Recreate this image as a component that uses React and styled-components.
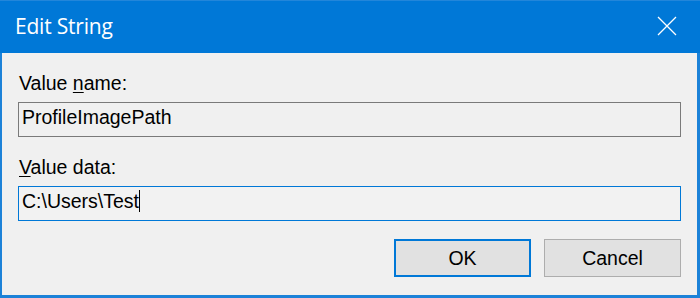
import styled, { createGlobalStyle } from 'styled-components';

const GlobalStyle = createGlobalStyle`
  html, body {
    margin: 0;
    padding: 0;
    background: #f0f0f0;
  }
`

const Window = styled.div`
  width: 700px;
  height: 298px;
  box-sizing: border-box;
  display: flex;
  flex-direction: column;
  background: #f0f0f0;
  border-left: 2px solid #1c82d8;
  border-right: 3px solid #1c82d8;
  border-bottom: 3px solid #1c82d8;
  font-family: "Liberation Sans", Arial, sans-serif;
  color: #000;
`

const TitleBar = styled.div`
  height: 53px;
  margin-left: -2px;
  margin-right: -3px;
  flex-shrink: 0;
  display: flex;
  align-items: center;
  justify-content: space-between;
  background: #0078d7;
  border-top: 1px solid #2286da;
  box-sizing: border-box;
  padding: 0 0 2px 15px;
`

const Title = styled.span`
  font-family: "Open Sans", "Noto Sans", sans-serif;
  font-size: 21px;
  color: #fff;
  letter-spacing: -0.2px;
`

const CloseButton = styled.div`
  width: 46px;
  height: 100%;
  display: flex;
  align-items: center;
  justify-content: center;
  margin-right: 10px;
`

const Body = styled.div`
  flex: 1;
  display: flex;
  flex-direction: column;
  padding: 19px 16px 0 16px;
`

const Label = styled.div`
  font-size: 19.5px;
  line-height: 22px;
  height: 22px;
  margin-bottom: 8px;
  padding-left: 1px;
`

const Key = styled.span`
  text-decoration: underline;
  text-underline-offset: 2px;
  text-decoration-thickness: 1px;
`

const Field = styled.div`
  height: 35px;
  box-sizing: border-box;
  border: 1px solid ${p => (p.$focused ? '#0078d7' : '#7a7a7a')};
  background: ${p => (p.$focused ? '#f2f2f2' : '#f0f0f0')};
  display: flex;
  align-items: flex-start;
  padding: 3px 0 0 3px;
  font-size: 19.5px;
  line-height: 22px;
  margin-bottom: ${p => p.$gap}px;
`

const Caret = styled.span`
  display: inline-block;
  width: 1px;
  height: 22px;
  background: #000;
`

const ButtonRow = styled.div`
  display: flex;
  justify-content: flex-end;
  gap: 13px;
`

const Button = styled.div`
  width: 137px;
  height: 38px;
  box-sizing: border-box;
  display: flex;
  align-items: center;
  justify-content: center;
  background: #e1e1e1;
  border: ${p => (p.$default ? '2px solid #0078d7' : '1px solid #adadad')};
  font-size: 19.5px;
`

export default function App() {
  return (
    <>
      <GlobalStyle />
      <Window>
        <TitleBar>
          <Title>Edit String</Title>
          <CloseButton>
            <svg width="20" height="20" viewBox="0 0 20 20">
              <path d="M1 1 L19 19 M19 1 L1 19" stroke="#fff" strokeWidth="1.3" fill="none" />
            </svg>
          </CloseButton>
        </TitleBar>
        <Body>
          <Label>Value <Key>n</Key>ame:</Label>
          <Field $gap={19}>ProfileImagePath</Field>
          <Label><Key>V</Key>alue data:</Label>
          <Field $focused $gap={18}>
            C:\Users\Test<Caret />
          </Field>
          <ButtonRow>
            <Button $default>OK</Button>
            <Button>Cancel</Button>
          </ButtonRow>
        </Body>
      </Window>
    </>
  );
}
